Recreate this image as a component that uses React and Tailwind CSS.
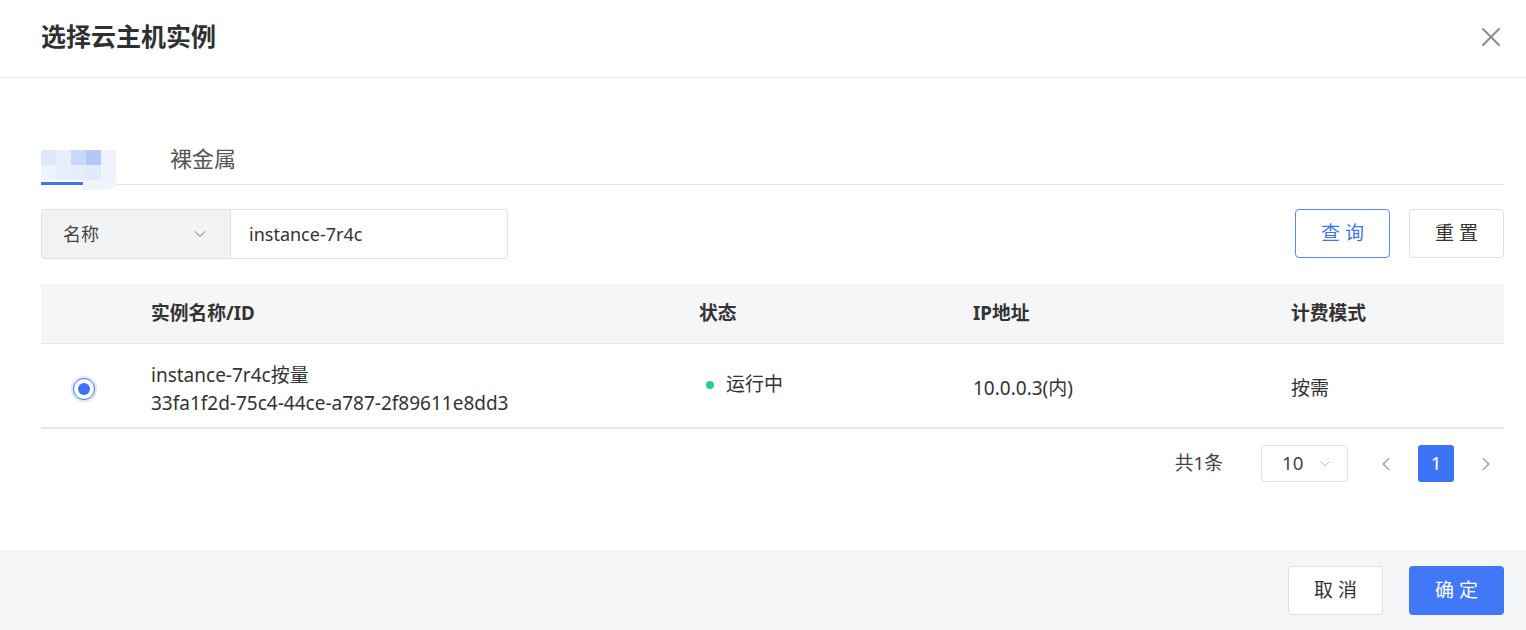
import React from 'react';
import { X, ChevronDown, ChevronLeft, ChevronRight } from 'lucide-react';

// blurred (mosaic) first tab label, as in the screenshot
const mosaicTop = [
  ['#dfe7fb', '#e9eefc', '#c9d7f8', '#b5c8f5', '#eef3fd'],
  ['#eff3fe', '#e8eefc', '#e6ecfc', '#e1e9fc', '#f0f4fe'],
];

export default function App() {
  return (
    <div className="w-[1526px] h-[630px] bg-white flex flex-col font-['Noto_Sans','Noto_Sans_CJK_SC',sans-serif] text-[#333]">
      {/* Header */}
      <div className="h-[78px] shrink-0 flex items-center justify-between pl-[41px] pr-[19px] pb-[4px] border-b border-[#e6e9ef]">
        <h1 className="text-[25px] font-bold text-[#2f3033] leading-none">选择云主机实例</h1>
        <X className="w-[32px] h-[32px] text-[#8a8a8a]" strokeWidth={1.4} />
      </div>

      {/* Body */}
      <div className="flex-1 pl-[41px] pr-[22px] pt-[52px]">
        {/* Tabs */}
        <div className="h-[55px] flex border-b border-[#e4e7ed]">
          <div className="relative w-[76px] pt-[14px]">
            <span className="text-[22px] leading-[28px] text-transparent">云主机</span>
            <div className="absolute left-0 bottom-[-1px] w-[42px] h-[3px] bg-[#3b76f6]" />
            <div className="absolute left-0 top-[20px] grid grid-cols-5">
              {mosaicTop.flat().map((c, i) => (
                <div key={i} className="w-[15px] h-[15px]" style={{ backgroundColor: c }} />
              ))}
            </div>
            <div className="absolute left-[42px] top-[50px] w-[34px] h-[10px] rounded-br-[10px] bg-[#f0f4fe]" />
          </div>
          <div className="ml-[53px] pt-[14px]">
            <span className="text-[22px] leading-[28px] text-[#555]">裸金属</span>
          </div>
        </div>

        {/* Search row */}
        <div className="mt-[24px] h-[50px] flex justify-between">
          <div className="flex">
            <div className="w-[190px] h-full flex items-center justify-between pl-[21px] pr-[20px] bg-[#f2f3f5] border border-[#dcdfe6] rounded-l-[4px]">
              <span className="text-[18px] text-[#444]">名称</span>
              <ChevronDown className="w-[20px] h-[20px] text-[#a8abb2]" strokeWidth={1.3} />
            </div>
            <div className="w-[277px] h-full flex items-center pl-[18px] border border-l-0 border-[#dcdfe6] rounded-r-[4px]">
              <span className="text-[18px] text-[#333]">instance-7r4c</span>
            </div>
          </div>
          <div className="flex gap-[19px]">
            <button className="w-[95px] h-[49px] border border-[#5b88f2] rounded-[4px] text-[19px] text-[#3f74f0] tracking-[5px] pl-[5px]">查询</button>
            <button className="w-[95px] h-[49px] border border-[#dcdfe6] rounded-[4px] text-[19px] text-[#333] tracking-[5px] pl-[5px]">重置</button>
          </div>
        </div>

        {/* Table */}
        <div className="mt-[25px]">
          <div className="h-[60px] grid grid-cols-[110px_548px_274px_318px_1fr] items-center bg-[#f5f6f8] border-b border-[#e4e7ed] text-[18.75px] font-bold text-[#333]">
            <div />
            <div>实例名称/ID</div>
            <div>状态</div>
            <div>IP地址</div>
            <div>计费模式</div>
          </div>
          <div className="h-[85px] pt-[6px] grid grid-cols-[110px_548px_274px_318px_1fr] items-center border-b-2 border-[#e3e6ec] text-[19px] text-[#333]">
            <div className="pl-[32px]">
              <div className="w-[22px] h-[22px] rounded-full border-[1.5px] border-[#3d74f6] ring-[2px] ring-[#dbe6fd] flex items-center justify-center">
                <div className="w-[12px] h-[12px] rounded-full bg-[#3d74f6]" />
              </div>
            </div>
            <div className="leading-[28px]">
              <div>instance-7r4c按量</div>
              <div>33fa1f2d-75c4-44ce-a787-2f89611e8dd3</div>
            </div>
            <div className="flex items-center gap-[12px] pl-[7px] -mt-[8px]">
              <span className="w-[8px] h-[8px] rounded-full bg-[#2ecc8a]" />
              <span>运行中</span>
            </div>
            <div>10.0.0.3(内)</div>
            <div>按需</div>
          </div>
        </div>

        {/* Pagination */}
        <div className="mt-[16px] h-[37px] flex items-center justify-end">
          <span className="text-[18.75px] text-[#444]">共1条</span>
          <div className="ml-[38px] w-[87px] h-[37px] flex items-center justify-between pl-[20px] pr-[14px] border border-[#dcdfe6] rounded-[4px]">
            <span className="text-[18.75px] text-[#444]">10</span>
            <ChevronDown className="w-[16px] h-[16px] text-[#b0b3b9]" strokeWidth={1.3} />
          </div>
          <div className="ml-[20px] w-[36px] h-[36px] flex items-center justify-center">
            <ChevronLeft className="w-[22px] h-[22px] text-[#9a9da4]" strokeWidth={1.5} />
          </div>
          <div className="ml-[14px] w-[36px] h-[37px] flex items-center justify-center bg-[#3d74f6] rounded-[3px] text-white text-[18.75px]">1</div>
          <div className="ml-[14px] w-[36px] h-[36px] flex items-center justify-center">
            <ChevronRight className="w-[22px] h-[22px] text-[#9a9da4]" strokeWidth={1.5} />
          </div>
        </div>
      </div>

      {/* Footer */}
      <div className="h-[80px] shrink-0 bg-[#f5f6f8] flex items-center justify-end gap-[26px] pr-[22px]">
        <button className="w-[95px] h-[49px] bg-white border border-[#dcdfe6] rounded-[4px] text-[19px] text-[#333] tracking-[5px] pl-[5px]">取消</button>
        <button className="w-[95px] h-[49px] bg-[#4178f7] rounded-[4px] text-[19px] text-white tracking-[5px] pl-[5px]">确定</button>
      </div>
    </div>
  );
}
